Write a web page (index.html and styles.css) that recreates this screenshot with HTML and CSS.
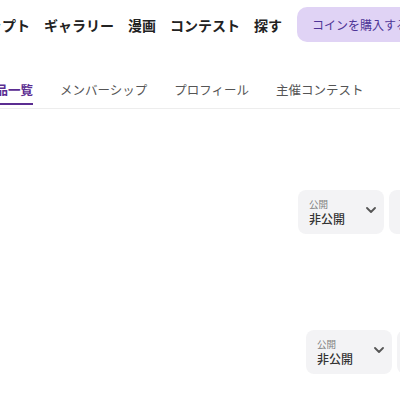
FILE: index.html
```html
<!DOCTYPE html>
<html>
<head>
    <meta charset="UTF-8">
    <title>作品一覧</title>
    <link rel="stylesheet" href="styles.css">
</head>
<body>
<div class="header">
    <div class="nav">
        <a class="nav-item">ップト</a>
        <a class="nav-item">ギャラリー</a>
        <a class="nav-item">漫画</a>
        <a class="nav-item">コンテスト</a>
        <a class="nav-item">探す</a>
    </div>
    <div class="coin-btn">コインを購入する</div>
</div>

<div class="tabs">
    <a class="tab active">作品一覧</a>
    <a class="tab">メンバーシップ</a>
    <a class="tab">プロフィール</a>
    <a class="tab">主催コンテスト</a>
</div>

<div class="works">
    <div class="work-row">
        <div class="selects">
            <div class="select">
                <div>
                    <div class="select-label">公開</div>
                    <div class="select-value">非公開</div>
                </div>
                <svg class="chevron" width="10" height="6" viewBox="0 0 10 6"><path d="M1 1l4 4 4-4" fill="none" stroke="#555" stroke-width="1.8" stroke-linecap="round" stroke-linejoin="round"/></svg>
            </div>
            <div class="select">
                <div>
                    <div class="select-label">年齢制限</div>
                    <div class="select-value">全年齢</div>
                </div>
                <svg class="chevron" width="10" height="6" viewBox="0 0 10 6"><path d="M1 1l4 4 4-4" fill="none" stroke="#555" stroke-width="1.8" stroke-linecap="round" stroke-linejoin="round"/></svg>
            </div>
        </div>
    </div>
    <div class="work-row second">
        <div class="selects">
            <div class="select">
                <div>
                    <div class="select-label">公開</div>
                    <div class="select-value">非公開</div>
                </div>
                <svg class="chevron" width="10" height="6" viewBox="0 0 10 6"><path d="M1 1l4 4 4-4" fill="none" stroke="#555" stroke-width="1.8" stroke-linecap="round" stroke-linejoin="round"/></svg>
            </div>
            <div class="select">
                <div>
                    <div class="select-label">年齢制限</div>
                    <div class="select-value">全年齢</div>
                </div>
                <svg class="chevron" width="10" height="6" viewBox="0 0 10 6"><path d="M1 1l4 4 4-4" fill="none" stroke="#555" stroke-width="1.8" stroke-linecap="round" stroke-linejoin="round"/></svg>
            </div>
        </div>
    </div>
</div>
</body>
</html>
```

FILE: styles.css
```css
body {
    margin: 0;
    font-family: "Noto Sans CJK JP", "Noto Sans", sans-serif;
    background-color: #fff;
    overflow: hidden;
    width: 400px;
    height: 400px;
}
.header {
    display: flex;
    align-items: center;
    height: 49px;
    white-space: nowrap;
}
.nav {
    display: flex;
    gap: 14px;
    margin-left: -12px;
}
.nav-item {
    font-size: 14px;
    font-weight: bold;
    color: #222;
}
.coin-btn {
    margin-left: 15px;
    flex-shrink: 0;
    height: 35px;
    line-height: 35px;
    padding: 0 15px;
    border-radius: 10px;
    background-color: #e0d3f5;
    color: #4e3597;
    font-size: 12px;
}
.tabs {
    display: flex;
    gap: 27px;
    margin-top: 27px;
    height: 32px;
    border-bottom: 1px solid #ededed;
    white-space: nowrap;
}
.tab {
    font-size: 12.5px;
    color: #555;
    line-height: 28px;
}
.tab.active {
    margin-left: -17px;
    color: #5b2d91;
    font-weight: bold;
    height: 27px;
    border-bottom: 2px solid #5b2d91;
}
.work-row {
    height: 140px;
    padding-top: 81px;
    box-sizing: border-box;
}
.selects {
    display: flex;
    gap: 5px;
    padding-left: 298px;
}
.work-row.second .selects {
    padding-left: 306px;
}
.select {
    flex-shrink: 0;
    width: 86px;
    height: 44px;
    box-sizing: border-box;
    padding: 0 8px 0 11px;
    border-radius: 8px;
    background-color: #f3f3f5;
    display: flex;
    align-items: center;
    justify-content: space-between;
}
.select-label {
    font-size: 9.5px;
    color: #808080;
    line-height: 13px;
}
.select-value {
    font-size: 12px;
    font-weight: 500;
    color: #333;
    line-height: 15px;
}
.chevron {
    margin-top: -4px;
}
```
